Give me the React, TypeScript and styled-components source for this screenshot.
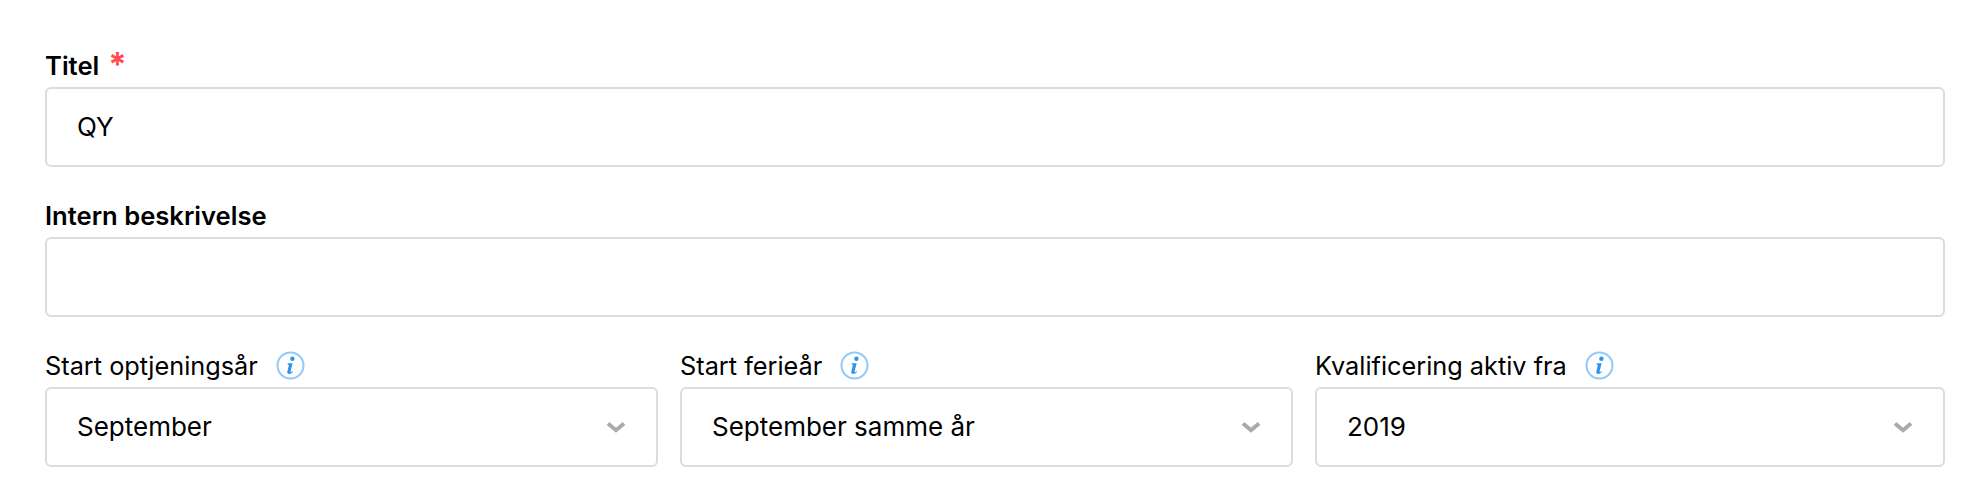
import styled, { createGlobalStyle } from 'styled-components'

const GlobalStyle = createGlobalStyle`
  html, body {
    margin: 0;
    padding: 0;
    background: #fff;
  }
  body {
    font-family: 'Inter', 'Lato', sans-serif;
    color: #000;
  }
`

const Form = styled.form`
  display: flex;
  flex-direction: column;
  gap: 29px;
  padding: 46px 25px 0 45px;
`

const Field = styled.div`
  display: flex;
  flex-direction: column;
`

const Label = styled.label<{ $strong?: boolean }>`
  box-sizing: border-box;
  display: flex;
  align-items: center;
  height: 41px;
  padding-bottom: 2px;
  font-size: ${props => (props.$strong ? '25.6px' : '25.3px')};
  font-weight: ${props => (props.$strong ? 600 : 400)};
  white-space: nowrap;
`

const Required = styled.span`
  color: #ff4d4f;
  font-size: 33px;
  font-weight: 700;
  line-height: 1;
  margin-left: 9px;
  height: 36px;
`

const Box = styled.div`
  box-sizing: border-box;
  display: flex;
  align-items: center;
  justify-content: space-between;
  height: 80px;
  padding: 0 30px 1px 30px;
  border: 2px solid #dcdcdc;
  border-radius: 6px;
  background: #fff;
  font-size: 26px;
`

const SelectRow = styled.div`
  display: grid;
  grid-template-columns: 612.5px 612.5px 1fr;
  column-gap: 22.5px;
`

const InfoMark = styled.svg`
  flex: none;
  width: 29px;
  height: 29px;
  margin-left: 18px;
`

const Chevron = styled.svg`
  flex: none;
  width: 20px;
  height: 12px;
`

const InfoIcon = () => (
  <InfoMark viewBox="0 0 29 29">
    <circle cx="14.5" cy="14.5" r="13" fill="none" stroke="#93c9f9" strokeWidth="2" />
    <circle cx="16.4" cy="7.800" r="2.200" fill="#2b95ee" />
    <path
      d="M11.400 12.200h5.200l-2 8.400c-.1.600.5.700 1 .3l1-.8.500.7c-1 1.200-2.300 2.100-3.900 2.100-1.400 0-2.200-.8-1.900-2.100l1.500-6.500c.1-.5-.2-.7-.9-.8z"
      fill="#2b95ee"
    />
  </InfoMark>
)

const ChevronIcon = () => (
  <Chevron viewBox="0 0 20 12">
    <path d="M2 2.500 10 9.200l8-6.700" fill="none" stroke="#aaaaaa" strokeWidth="4" />
  </Chevron>
)

const selects = [
  { label: 'Start optjeningsår', value: 'September' },
  { label: 'Start ferieår', value: 'September samme år' },
  { label: 'Kvalificering aktiv fra', value: '2019' }
]

export default function App() {
  return (
    <>
      <GlobalStyle />
      <Form>
        <Field>
          <Label $strong>
            Titel
            <Required>*</Required>
          </Label>
          <Box>QY</Box>
        </Field>
        <Field>
          <Label $strong>Intern beskrivelse</Label>
          <Box />
        </Field>
        <SelectRow>
          {selects.map(select => (
            <Field key={select.label}>
              <Label>
                {select.label}
                <InfoIcon />
              </Label>
              <Box>
                {select.value}
                <ChevronIcon />
              </Box>
            </Field>
          ))}
        </SelectRow>
      </Form>
    </>
  )
}
